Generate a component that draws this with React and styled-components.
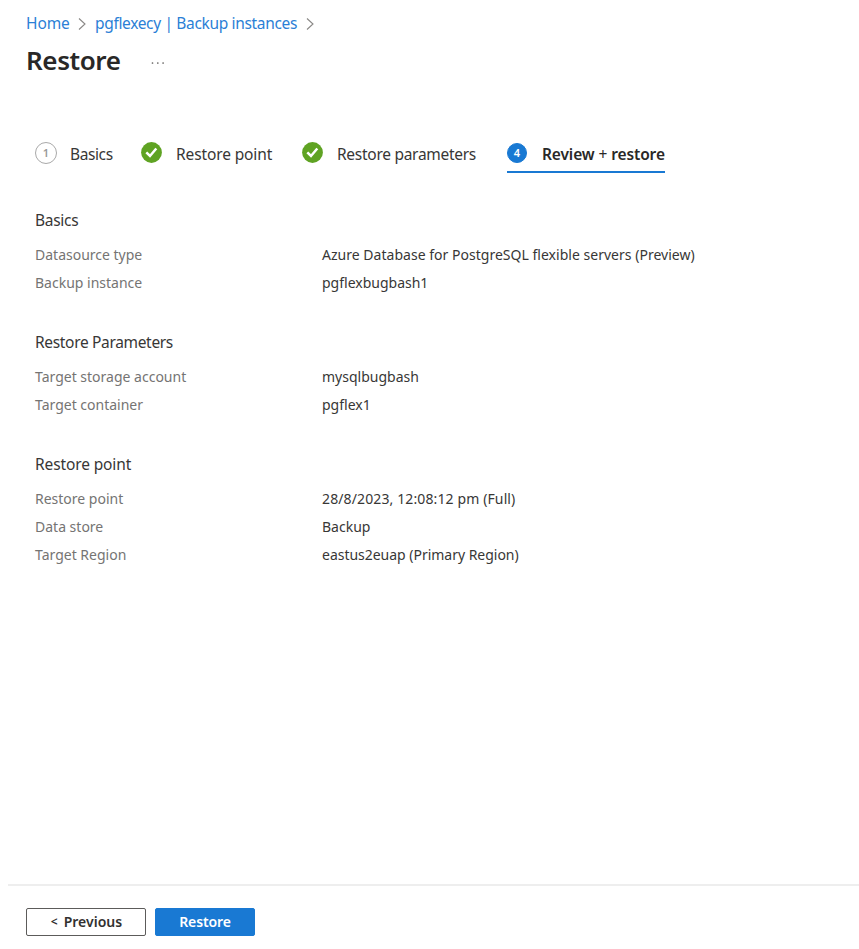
import React from "react";
import styled, { createGlobalStyle, css } from "styled-components";

const GlobalStyle = createGlobalStyle`
  * { box-sizing: border-box; }
  body {
    margin: 0;
    background: #fff;
    color: #383736;
    font-family: "Noto Sans", "Open Sans", sans-serif;
    font-size: 14px;
  }
`;

const Page = styled.div`
  display: flex;
  flex-direction: column;
  height: 949px;
  overflow: hidden;
`;

const Breadcrumb = styled.nav`
  display: flex;
  align-items: center;
  height: 22px;
  margin: 12px 0 0 26px;
  font-size: 15.5px;
  line-height: 22px;
  white-space: nowrap;
`;

const Crumb = styled.a`
  width: ${(p) => p.$width}px;
  color: #2b80d6;
  letter-spacing: ${(p) => p.$tracking}px;
`;

const Separator = styled.svg`
  width: 8px;
  height: 14px;
  margin: 1px 9px 0 9px;
  fill: none;
  stroke: #8a8886;
  stroke-width: 1.1;
`;

const TitleBar = styled.header`
  display: flex;
  align-items: center;
  height: 40px;
  margin: 6px 0 0 26px;
`;

const Title = styled.h1`
  width: 125px;
  margin: 0;
  color: #292827;
  font-size: 26px;
  font-weight: 600;
  line-height: 40px;
  letter-spacing: -0.4px;
`;

const MoreIcon = styled.svg`
  width: 14px;
  height: 4px;
  margin-top: 5px;
  fill: #605e5c;
`;

const Steps = styled.div`
  display: flex;
  height: 42px;
  margin: 51px 0 0 35px;
`;

const Step = styled.div`
  display: flex;
  align-items: center;
  height: 42px;
  width: ${(p) => p.$width}px;
  margin-right: ${(p) => p.$after}px;
  padding-top: ${(p) => (p.$active ? 4 : 2)}px;
  white-space: nowrap;
  ${(p) =>
    p.$active &&
    css`
      border-bottom: 2px solid #1979d3;
      color: #292827;
      font-weight: 600;
    `}
`;

const StepLabel = styled.span`
  margin-left: ${(p) => p.$gap}px;
  font-size: 15.5px;
  line-height: 22px;
  padding-top: 1px;
  letter-spacing: ${(p) => p.$tracking}px;
`;

const Plus = styled.span`
  font-weight: 400;
`;

const NumberBadge = styled.span`
  display: flex;
  flex: none;
  align-items: center;
  justify-content: center;
  width: ${(p) => (p.$active ? 20 : 22)}px;
  height: ${(p) => (p.$active ? 20 : 22)}px;
  margin-bottom: 1px;
  border: 1.5px solid ${(p) => (p.$active ? "#1979d3" : "#a9a9a9")};
  border-radius: 50%;
  background: ${(p) => (p.$active ? "#1979d3" : "#fff")};
  color: ${(p) => (p.$active ? "#fff" : "#999")};
  font-size: 11px;
  font-weight: 600;
  line-height: 1;
`;

const CheckIcon = styled.svg`
  flex: none;
  width: 21px;
  height: 21px;
  margin-bottom: 1px;
`;

const Summary = styled.main`
  display: flex;
  flex: 1;
  flex-direction: column;
  gap: 34.4px;
  padding: 36px 0 0 35px;
`;

const SectionTitle = styled.h2`
  margin: 0 0 10px;
  font-size: 15.5px;
  font-weight: 400;
  line-height: 22px;
  letter-spacing: ${(p) => p.$tracking}px;
`;

const Field = styled.div`
  display: grid;
  grid-template-columns: 287px 1fr;
  line-height: 27.8px;
  white-space: nowrap;
`;

const FieldName = styled.span`
  color: #757473;
`;

const FieldValue = styled.span`
  letter-spacing: ${(p) => p.$tracking || 0}px;
`;

const Footer = styled.footer`
  display: flex;
  gap: 9px;
  height: 65px;
  margin-left: 8px;
  padding: 22px 0 0 18px;
  border-top: 2px solid #eeeeee;
`;

const Button = styled.button`
  display: flex;
  align-items: center;
  justify-content: center;
  width: ${(p) => p.$width}px;
  height: 28px;
  padding: 0 0 2px;
  border: 1px solid ${(p) => (p.$primary ? "#1979d3" : "#5c5b5a")};
  border-radius: 2px;
  background: ${(p) => (p.$primary ? "#1979d3" : "#fff")};
  color: ${(p) => (p.$primary ? "#fff" : "#323130")};
  font: 600 14px "Noto Sans", sans-serif;
  letter-spacing: ${(p) => (p.$primary ? -0.1 : 0)}px;
`;

const Less = styled.span`
  margin: 1px 6px 0 1px;
  font-size: 12px;
`;

const Chevron = () => (
  <Separator viewBox="0 0 8 14">
    <path d="M1 1.5 L7 7 L1 12.5" />
  </Separator>
);

const Check = () => (
  <CheckIcon viewBox="0 0 21 21">
    <circle cx="10.5" cy="10.5" r="10.4" fill="#5fa323" />
    <path d="M5.3 10.3 L9 14 L15.3 6.5" fill="none" stroke="#fff" strokeWidth="2.5" />
  </CheckIcon>
);

const sections = [
  {
    title: "Basics",
    tracking: -0.3,
    fields: [
      ["Datasource type", "Azure Database for PostgreSQL flexible servers (Preview)", 0.02],
      ["Backup instance", "pgflexbugbash1"],
    ],
  },
  {
    title: "Restore Parameters",
    tracking: -0.33,
    fields: [
      ["Target storage account", "mysqlbugbash"],
      ["Target container", "pgflex1"],
    ],
  },
  {
    title: "Restore point",
    tracking: -0.12,
    fields: [
      ["Restore point", "28/8/2023, 12:08:12 pm (Full)", 0.12],
      ["Data store", "Backup"],
      ["Target Region", "eastus2euap (Primary Region)", -0.02],
    ],
  },
];

export default function App() {
  return (
    <Page>
      <GlobalStyle />
      <Breadcrumb>
        <Crumb $width={43} $tracking={-0.1}>Home</Crumb>
        <Chevron />
        <Crumb $width={202} $tracking={-0.34}>pgflexecy | Backup instances</Crumb>
        <Chevron />
      </Breadcrumb>
      <TitleBar>
        <Title>Restore</Title>
        <MoreIcon viewBox="0 0 14 4">
          <circle cx="1.5" cy="2" r="0.85" />
          <circle cx="6.8" cy="2" r="0.85" />
          <circle cx="12.1" cy="2" r="0.85" />
        </MoreIcon>
      </TitleBar>
      <Steps>
        <Step $width={78} $after={28}>
          <NumberBadge>1</NumberBadge>
          <StepLabel $gap={13} $tracking={-0.4}>Basics</StepLabel>
        </Step>
        <Step $width={131} $after={30}>
          <Check />
          <StepLabel $gap={14} $tracking={-0.12}>Restore point</StepLabel>
        </Step>
        <Step $width={175} $after={30}>
          <Check />
          <StepLabel $gap={14} $tracking={-0.28}>Restore parameters</StepLabel>
        </Step>
        <Step $width={158} $after={0} $active>
          <NumberBadge $active>4</NumberBadge>
          <StepLabel $gap={15} $tracking={-0.11}>
            Review <Plus>+</Plus> restore
          </StepLabel>
        </Step>
      </Steps>
      <Summary>
        {sections.map((section) => (
          <section key={section.title}>
            <SectionTitle $tracking={section.tracking}>{section.title}</SectionTitle>
            {section.fields.map(([name, value, tracking]) => (
              <Field key={name}>
                <FieldName>{name}</FieldName>
                <FieldValue $tracking={tracking}>{value}</FieldValue>
              </Field>
            ))}
          </section>
        ))}
      </Summary>
      <Footer>
        <Button $width={120}>
          <Less>&lt;</Less>Previous
        </Button>
        <Button $width={100} $primary>Restore</Button>
      </Footer>
    </Page>
  );
}
